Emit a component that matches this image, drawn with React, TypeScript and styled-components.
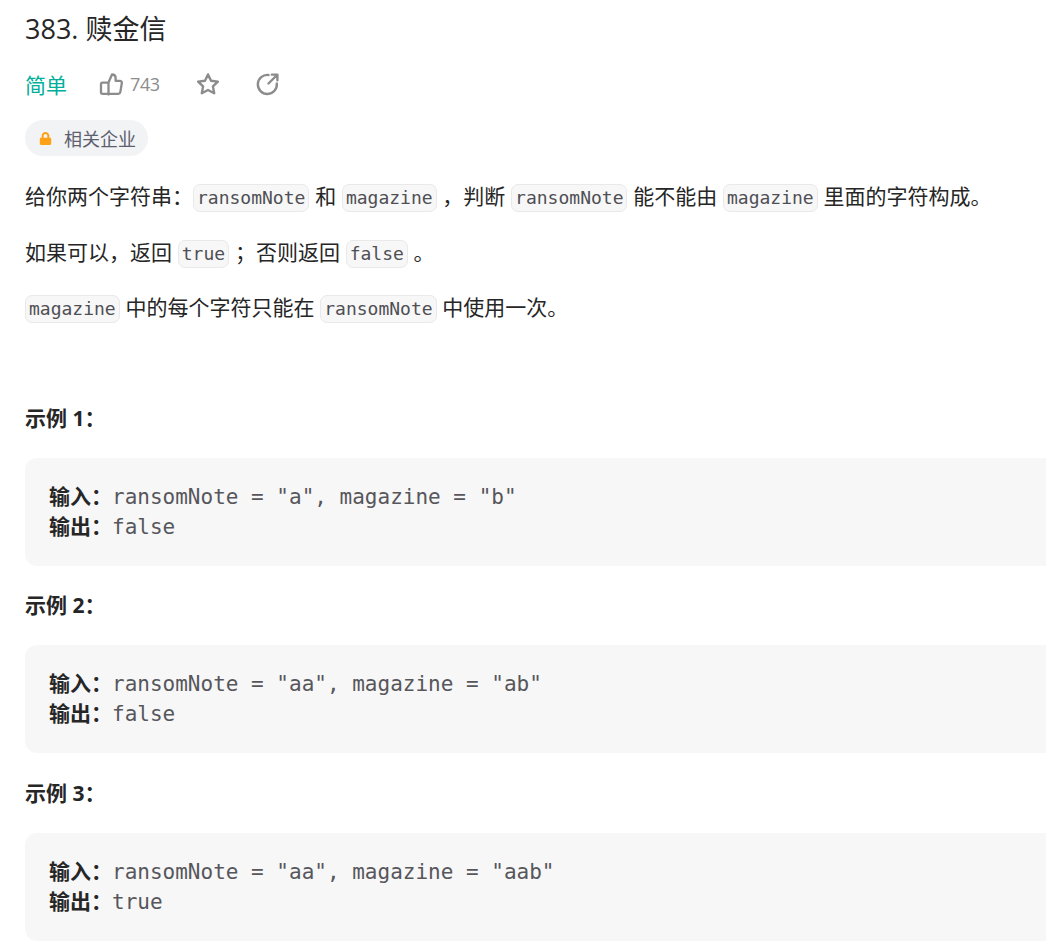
import styled, { createGlobalStyle } from "styled-components";
import { FaLock } from "react-icons/fa";

const GlobalStyle = createGlobalStyle`
  html, body {
    margin: 0;
    padding: 0;
    background: #fff;
    overflow: hidden;
  }
  body {
    font-family: "Open Sans", "Noto Sans CJK SC", sans-serif;
    color: #262626;
  }
`;

const Page = styled.div`
  width: 1060px;
  height: 945px;
  padding: 11px 0 0 25px;
  box-sizing: border-box;
  overflow: hidden;
`;

const Title = styled.h1`
  margin: 0;
  font-size: 27px;
  line-height: 36px;
  font-weight: 400;
  color: #262626;
`;

const MetaRow = styled.div`
  display: flex;
  align-items: center;
  height: 36px;
  margin-top: 19px;
`;

const Difficulty = styled.span`
  font-size: 21px;
  color: #00af9b;
  width: 74px;
`;

const Likes = styled.span`
  font-size: 18px;
  letter-spacing: -0.4px;
  color: #8c8c8c;
  margin-left: 7px;
  width: 66px;
`;

const IconButton = styled.span<{ $gap: number }>`
  display: inline-flex;
  margin-left: ${(p) => p.$gap}px;
  color: #8c8c8c;
`;

const Pill = styled.div`
  display: inline-flex;
  align-items: center;
  height: 36px;
  margin-top: 18px;
  padding: 0 12px 0 14px;
  border-radius: 18px;
  background: #f2f3f5;
  font-size: 18px;
  color: #5c5f6e;
  gap: 12px;
  svg {
    color: #ffa116;
  }
`;

const Para = styled.p<{ $top: number }>`
  margin: ${(p) => p.$top}px 0 0;
  font-size: 21px;
  line-height: 34px;
  height: 34px;
  word-spacing: 0.3px;
  white-space: nowrap;
  color: #262626;
`;

const Code = styled.code`
  display: inline-block;
  font-family: "DejaVu Sans Mono", monospace;
  font-size: 18px;
  line-height: 26px;
  padding: 0 3px;
  color: #4f4f54;
  background: #f7f7f8;
  border: 1px solid #e9e9ea;
  border-radius: 7px;
`;

const ExampleHeading = styled.div<{ $top: number }>`
  margin-top: ${(p) => p.$top}px;
  font-size: 21px;
  line-height: 30px;
  font-weight: 700;
  color: #262626;
`;

const ExampleBox = styled.pre`
  margin: 25px 0 0;
  height: 108px;
  box-sizing: border-box;
  padding: 24px 24px;
  border-radius: 12px;
  background: #f7f7f8;
  font-family: "DejaVu Sans Mono", "Noto Sans CJK SC", monospace;
  font-size: 21px;
  line-height: 30px;
  color: #56565b;
`;

const Label = styled.strong`
  font-family: "Open Sans", "Noto Sans CJK SC", sans-serif;
  font-weight: 700;
  line-height: 20px;
  color: #262626;
`;

const ThumbIcon = () => (
  <IconButton $gap={0}>
    <svg width="24" height="24" viewBox="0 0 24 24" fill="none" stroke="currentColor" strokeWidth="2.3" strokeLinejoin="round" strokeLinecap="round">
      <path d="M9.5 10.5L13 2.5c2.4 0 3.6 1.5 3.6 3.4v2.9h4.2a2 2 0 0 1 2 2.4l-1.5 8.9a2.2 2.2 0 0 1-2.1 1.8H3.5A1.5 1.5 0 0 1 2 20.9v-8.8a1.5 1.5 0 0 1 1.5-1.5h6v11.9" />
    </svg>
  </IconButton>
);

const StarIcon = () => (
  <svg width="24" height="24" viewBox="0 0 24 24" fill="none" stroke="currentColor" strokeWidth="2.4" strokeLinejoin="round">
    <path d="M12 2.4l3 6.3 6.9.9-5 4.8 1.3 6.9-6.2-3.3-6.2 3.3 1.3-6.9-5-4.8 6.9-.9z" />
  </svg>
);

const ShareIcon = () => (
  <svg width="24" height="24" viewBox="0 0 24 24" fill="none" stroke="currentColor" strokeWidth="2.4" strokeLinecap="round" strokeLinejoin="round">
    <path d="M20.8 11.5A9.5 9.5 0 1 1 12.5 3" />
    <path d="M12.5 11.5L21 3M15.8 2.6h5.6v5.6" />
  </svg>
);

const examples = [
  { input: `ransomNote = "a", magazine = "b"`, output: "false" },
  { input: `ransomNote = "aa", magazine = "ab"`, output: "false" },
  { input: `ransomNote = "aa", magazine = "aab"`, output: "true" },
];

export default function App() {
  return (
    <Page>
      <GlobalStyle />
      <Title>383. 赎金信</Title>
      <MetaRow>
        <Difficulty>简单</Difficulty>
        <ThumbIcon />
        <Likes>743</Likes>
        <IconButton $gap={0}>
          <StarIcon />
        </IconButton>
        <IconButton $gap={36}>
          <ShareIcon />
        </IconButton>
      </MetaRow>
      <Pill>
        <FaLock size={13} />
        相关企业
      </Pill>
      <Para $top={23}>
        给你两个字符串：<Code>ransomNote</Code> 和 <Code>magazine</Code> ，判断 <Code>ransomNote</Code> 能不能由 <Code>magazine</Code> 里面的字符构成。
      </Para>
      <Para $top={22}>
        如果可以，返回 <Code>true</Code> ；否则返回 <Code>false</Code> 。
      </Para>
      <Para $top={21}>
        <Code>magazine</Code> 中的每个字符只能在 <Code>ransomNote</Code> 中使用一次。
      </Para>
      {examples.map((ex, i) => (
        <div key={i}>
          <ExampleHeading $top={i === 0 ? 78.6 : 24.5}>示例 {i + 1}：</ExampleHeading>
          <ExampleBox>
            <Label>输入：</Label>
            {ex.input}
            {"\n"}
            <Label>输出：</Label>
            {ex.output}
          </ExampleBox>
        </div>
      ))}
    </Page>
  );
}
